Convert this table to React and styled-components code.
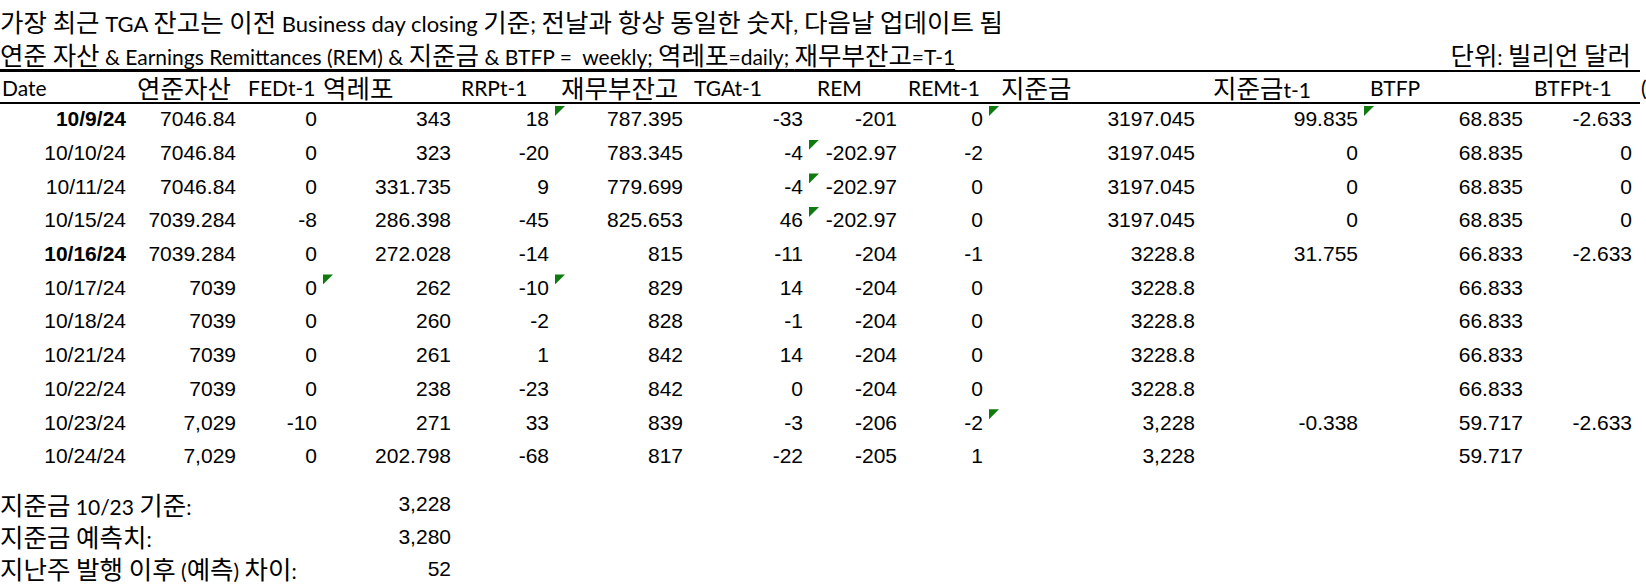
import React from "react";
import styled, { createGlobalStyle } from "styled-components";

const GlobalStyle = createGlobalStyle`
  html, body {
    margin: 0;
    padding: 0;
    background: #ffffff;
  }
  body {
    font-family: Lato, "Noto Sans CJK KR", sans-serif;
    color: #000000;
  }
`;

// column widths of the sheet (A..N)
const COLS = "130px 110px 81px 134px 98px 134px 120px 94px 86px 212px 163px 165px 109px 4px";

const Sheet = styled.div`
	width: 1646px;
`;

const TitleLine = styled.div`
	height: 34px;
	padding-top: 4px;
	display: flex;
	align-items: center;
	font-size: 22px;
	line-height: 1;
	white-space: pre;
`;

const TitleLine2 = styled.div`
	width: 1636px;
	height: 32px;
	display: flex;
	align-items: center;
	justify-content: space-between;
	font-size: 21px;
	line-height: 1;
	white-space: pre;
`;

const Plain = styled.span``;

const Underlined = styled.span`
	text-decoration: underline;
	text-decoration-thickness: 1px;
	text-underline-offset: 4px;
`;

const Unit = styled.span`
	padding-right: 5px;
`;

const Ko = styled.span`
	font-family: "Noto Sans CJK KR", sans-serif;
	font-size: 25.5px;
	line-height: 1;
`;

const HeaderRow = styled.div`
	width: 1640px;
	height: 30px;
	display: grid;
	grid-template-columns: ${COLS};
	align-items: center;
	border-top: 2px solid #000;
	border-bottom: 2px solid #000;
	font-size: 21px;
	line-height: 1;
`;

const HeadCell = styled.div`
	padding-left: ${(props) => props.$indent}px;
	white-space: nowrap;
	overflow: visible;
`;

const DataRow = styled.div`
	height: 33.7px;
	display: grid;
	grid-template-columns: ${COLS};
	align-items: center;
	font-family: "Liberation Sans", Arial, sans-serif;
	font-size: 21px;
	line-height: 1;
`;

const Cell = styled.div`
	position: relative;
	box-sizing: border-box;
	height: 100%;
	display: flex;
	align-items: center;
	justify-content: flex-end;
	padding: 0 4px 4px 0;
	white-space: nowrap;
	font-weight: ${(props) => (props.$bold ? 700 : 400)};
`;

const Flag = styled.span`
	position: absolute;
	top: 2px;
	left: 2px;
	width: 10px;
	height: 10px;
	background: #0f7b0f;
	clip-path: polygon(0 0, 100% 0, 0 100%);
`;

const Spacer = styled.div`
	height: 13px;
`;

const SumRow = styled.div`
	height: 32.3px;
	display: grid;
	grid-template-columns: ${COLS};
	align-items: center;
	font-size: 21px;
	line-height: 1;
`;

const SumLabel = styled.div`
	grid-column: 1 / span 3;
	white-space: pre;
`;

const SumValue = styled.div`
	grid-column: 4;
	text-align: right;
	padding-right: 4px;
	font-family: "Liberation Sans", Arial, sans-serif;
`;

const HANGUL = /([\u1100-\u11ff\u3130-\u318f\uac00-\ud7af]+(?:\s+[\u1100-\u11ff\u3130-\u318f\uac00-\ud7af]+)*)/;

const mix = (text) =>
	text.split(HANGUL).map((part, i) => (i % 2 ? <Ko key={i}>{part}</Ko> : part));

const headers = [
	["Date", 2],
	["연준자산", 7],
	["FEDt-1", 8],
	["역레포", 2],
	["RRPt-1", 6],
	["재무부잔고", 8],
	["TGAt-1", 7],
	["REM", 10],
	["REMt-1", 7],
	["지준금", 14],
	["지준금t-1", 14],
	["BTFP", 8],
	["BTFPt-1", 7],
	["(", 5],
];

const rows = [
	{ d: "10/9/24", bold: true, v: ["7046.84", "0", "343", "18", "787.395", "-33", "-201", "0", "3197.045", "99.835", "68.835", "-2.633"], flags: [5, 9, 11] },
	{ d: "10/10/24", v: ["7046.84", "0", "323", "-20", "783.345", "-4", "-202.97", "-2", "3197.045", "0", "68.835", "0"], flags: [7] },
	{ d: "10/11/24", v: ["7046.84", "0", "331.735", "9", "779.699", "-4", "-202.97", "0", "3197.045", "0", "68.835", "0"], flags: [7] },
	{ d: "10/15/24", v: ["7039.284", "-8", "286.398", "-45", "825.653", "46", "-202.97", "0", "3197.045", "0", "68.835", "0"], flags: [7] },
	{ d: "10/16/24", bold: true, v: ["7039.284", "0", "272.028", "-14", "815", "-11", "-204", "-1", "3228.8", "31.755", "66.833", "-2.633"], flags: [] },
	{ d: "10/17/24", v: ["7039", "0", "262", "-10", "829", "14", "-204", "0", "3228.8", "", "66.833", ""], flags: [3, 5] },
	{ d: "10/18/24", v: ["7039", "0", "260", "-2", "828", "-1", "-204", "0", "3228.8", "", "66.833", ""], flags: [] },
	{ d: "10/21/24", v: ["7039", "0", "261", "1", "842", "14", "-204", "0", "3228.8", "", "66.833", ""], flags: [] },
	{ d: "10/22/24", v: ["7039", "0", "238", "-23", "842", "0", "-204", "0", "3228.8", "", "66.833", ""], flags: [] },
	{ d: "10/23/24", v: ["7,029", "-10", "271", "33", "839", "-3", "-206", "-2", "3,228", "-0.338", "59.717", "-2.633"], flags: [9] },
	{ d: "10/24/24", v: ["7,029", "0", "202.798", "-68", "817", "-22", "-205", "1", "3,228", "", "59.717", ""], flags: [] },
];

const summary = [
	["지준금 10/23 기준:", "3,228"],
	["지준금 예측치:", "3,280"],
	["지난주 발행 이후 (예측) 차이:", "52"],
];

const App = () => (
	<>
		<GlobalStyle />
		<Sheet>
			<TitleLine>
				<Plain>
					{mix("가장 최근 TGA 잔고는 이전 Business day closing 기준; 전날과 항상 동일한 숫자, 다음날 업데이트 됨")}
				</Plain>
			</TitleLine>
			<TitleLine2>
				<Underlined>
					{mix("연준 자산 & Earnings Remittances (REM) & 지준금 & BTFP =  weekly; 역레포=daily; 재무부잔고=T-1")}
				</Underlined>
				<Unit>{mix("단위: 빌리언 달러")}</Unit>
			</TitleLine2>
			<HeaderRow>
				{headers.map(([label, indent]) => (
					<HeadCell key={label} $indent={indent}>
						{mix(label)}
					</HeadCell>
				))}
			</HeaderRow>
			{rows.map((row) => (
				<DataRow key={row.d}>
					<Cell $bold={row.bold}>{row.d}</Cell>
					{row.v.map((value, i) => (
						<Cell key={i}>
							{row.flags.includes(i + 1) && <Flag />}
							{value}
						</Cell>
					))}
					<Cell />
				</DataRow>
			))}
			<Spacer />
			{summary.map(([label, value]) => (
				<SumRow key={label}>
					<SumLabel>{mix(label)}</SumLabel>
					<SumValue>{value}</SumValue>
				</SumRow>
			))}
		</Sheet>
	</>
);

export default App;
